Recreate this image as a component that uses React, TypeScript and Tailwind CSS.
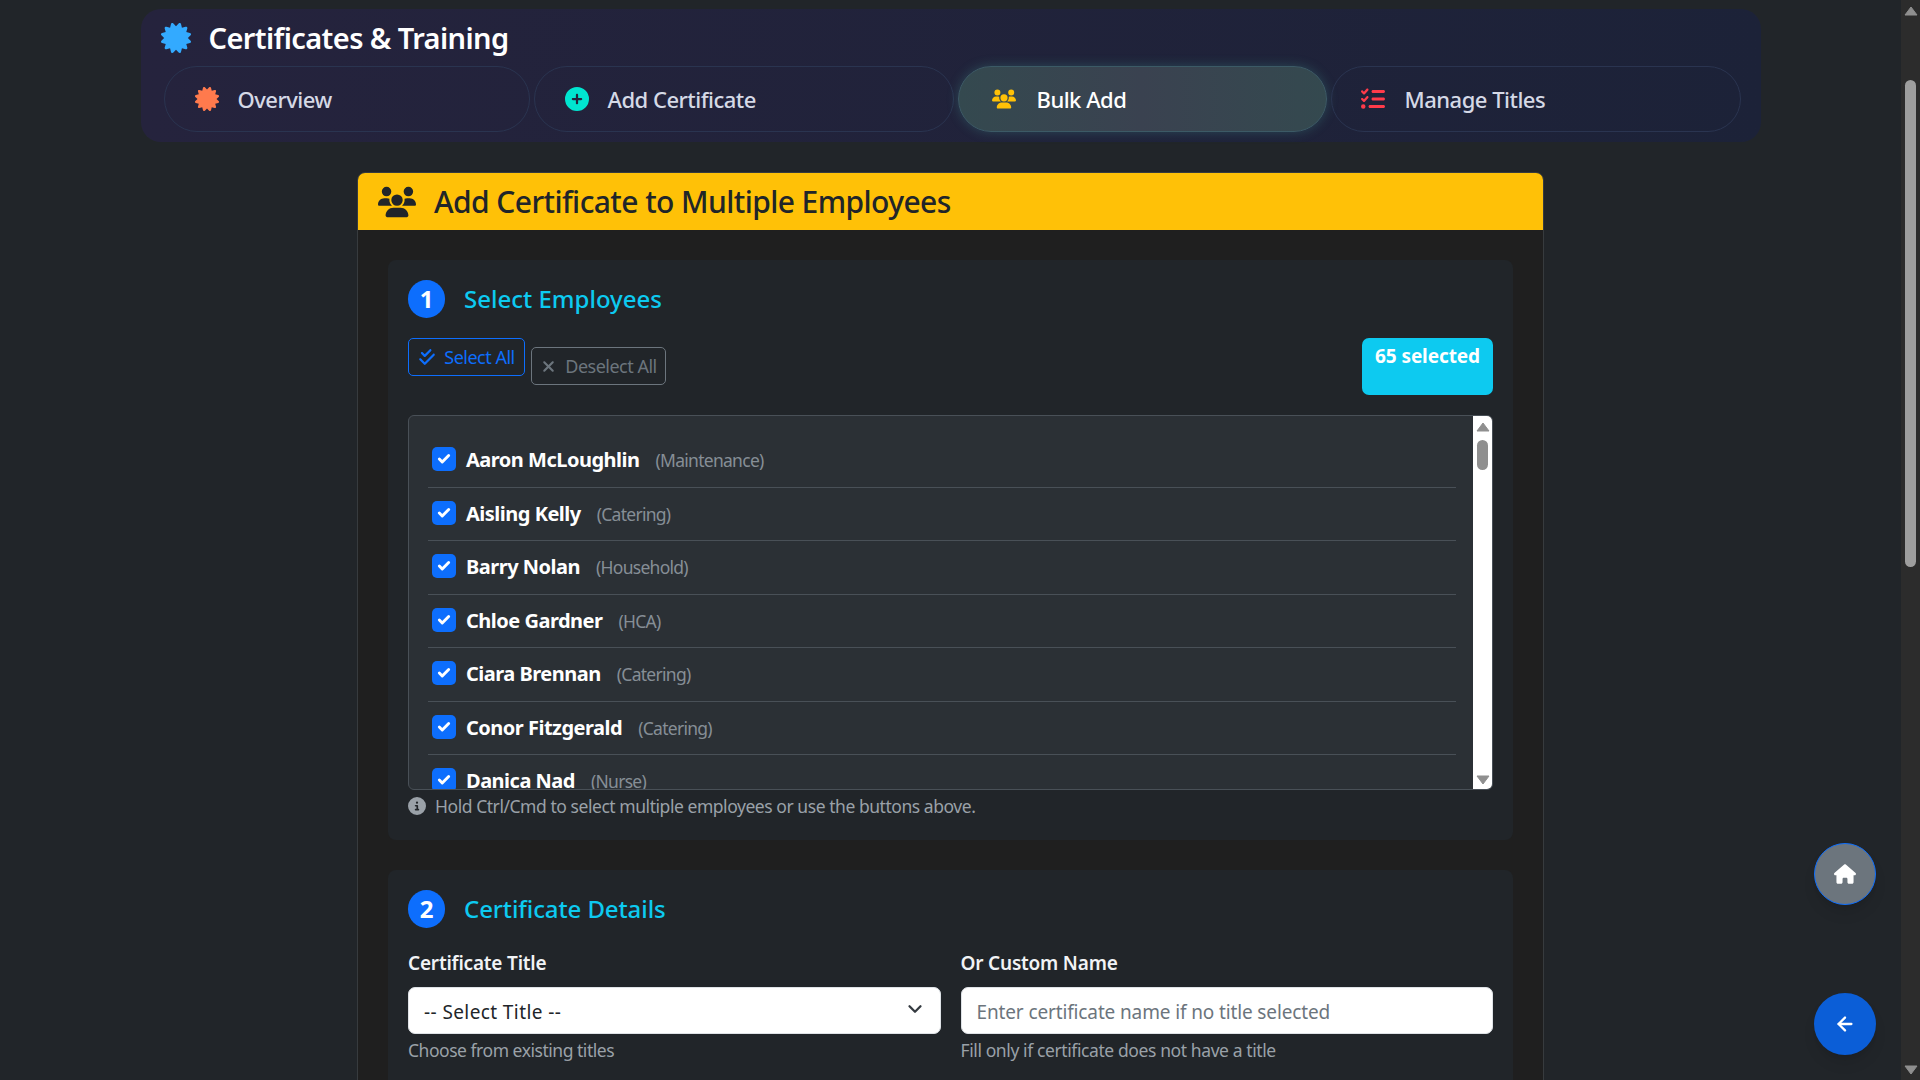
import { ArrowLeft, Check, ChevronDown } from "lucide-react";
import {
  FaCertificate,
  FaCheckDouble,
  FaCircleInfo,
  FaCirclePlus,
  FaHouse,
  FaListCheck,
  FaUsers,
  FaXmark,
} from "react-icons/fa6";

const tabs = [
  { label: "Overview", icon: FaCertificate, color: "text-[#ff7a4d]", width: "w-[366px]", pad: "pl-[30px] gap-[19px]" },
  { label: "Add Certificate", icon: FaCirclePlus, color: "text-[#00e5d0]", width: "w-[420px]", pad: "pl-[30px] gap-[19px]" },
  { label: "Bulk Add", icon: FaUsers, color: "text-[#ffc107]", width: "w-[369px]", pad: "pl-[33px] gap-[21px]", active: true },
  { label: "Manage Titles", icon: FaListCheck, color: "text-[#ff3b4a]", width: "w-[410px]", pad: "pl-[29px] gap-[20px]" },
];

const employees = [
  { name: "Aaron McLoughlin", dept: "Maintenance" },
  { name: "Aisling Kelly", dept: "Catering" },
  { name: "Barry Nolan", dept: "Household" },
  { name: "Chloe Gardner", dept: "HCA" },
  { name: "Ciara Brennan", dept: "Catering" },
  { name: "Conor Fitzgerald", dept: "Catering" },
  { name: "Danica Nad", dept: "Nurse" },
];

const Triangle = ({ down = false, className = "" }: { down?: boolean; className?: string }) => (
  <svg viewBox="0 0 14 10" className={className}>
    <path d={down ? "M1 1h12L7 9z" : "M7 1l6 8H1z"} fill="#8f8f8f" stroke="#8f8f8f" strokeLinejoin="round" />
  </svg>
);

const StepTitle = ({ step, title, tracking }: { step: number; title: string; tracking: string }) => (
  <div className="flex items-center gap-[19px]">
    <span className="flex h-[38px] w-[37px] items-center justify-center rounded-full bg-[#0d6efd] text-[24px] font-bold text-white">
      {step}
    </span>
    <h2 className={`text-[24px] leading-[38px] font-medium text-[#0dcaf0] ${tracking}`}>{title}</h2>
  </div>
);

const EmployeeList = () => (
  <div className="mt-[20px] flex h-[375px] overflow-hidden rounded-[6px] border border-[#495057] bg-[#2b3035]">
    <div className="flex-1 overflow-hidden pt-[18px] pl-[19px] pr-[17px]">
      {employees.map((e) => (
        <div key={e.name} className="flex h-[53.5px] shrink-0 items-center border-b border-[#495057] pl-[4px]">
          <span className="mb-[2px] flex h-[24px] w-[24px] items-center justify-center rounded-[5px] bg-[#0d6efd]">
            <Check className="h-[14px] w-[14px] text-white" strokeWidth={5} />
          </span>
          <span className="ml-[10px] text-[20px] font-bold tracking-[-0.5px] text-white">{e.name}</span>
          <span className="ml-[16px] text-[17.5px] tracking-[-0.72px] text-[#868e96]">({e.dept})</span>
        </div>
      ))}
    </div>
    <div className="flex w-[19px] flex-col items-center bg-white">
      <Triangle className="mt-[6px] h-[10px] w-[14px]" />
      <div className="mt-[8px] h-[30px] w-[11px] rounded-full bg-[#8f8f8f]" />
      <div className="flex-1" />
      <Triangle down className="mb-[4px] h-[10px] w-[14px]" />
    </div>
  </div>
);

const App = () => (
  <div
    className="relative flex h-screen overflow-hidden bg-[#212529] text-white"
    style={{ fontFamily: '"Noto Sans", "Open Sans", sans-serif' }}
  >
    <main className="flex-1 overflow-hidden">
      <header className="mx-auto mt-[9px] h-[133px] w-[1620px] rounded-[20px] bg-gradient-to-r from-[#25233d] to-[#1c2238] pr-[19px] pl-[23px]">
        <div className="flex h-[57px] items-center gap-[18px]">
          <FaCertificate className="ml-[-3px] text-[30px] text-[#33aaff]" />
          <h1 className="text-[29px] font-semibold tracking-[-0.6px] text-white">Certificates &amp; Training</h1>
        </div>
        <nav className="flex gap-[4px]">
          {tabs.map((t) => (
            <a
              key={t.label}
              className={`flex h-[66px] items-center rounded-[33px] border text-[22px] font-medium tracking-[-0.5px] ${t.width} ${t.pad} ${
                t.active
                  ? "border-[#3c5a66] bg-gradient-to-r from-[#34494f] via-[#3a4250] to-[#34494f] text-white shadow-[0_0_12px_rgba(70,160,150,0.3)]"
                  : "border-[#2a3450] text-[#d5d9e6]"
              }`}
            >
              <t.icon className={`text-[24px] ${t.color}`} />
              {t.label}
            </a>
          ))}
        </nav>
      </header>

      <section className="mx-auto mt-[30px] w-[1187px] rounded-t-[8px] border border-[#373b3e] bg-[#1f1f1f]">
        <div className="flex h-[57px] items-center gap-[18px] rounded-t-[7px] bg-[#ffc107] pl-[20px] text-[#212529]">
          <FaUsers className="text-[38px]" />
          <h3 className="text-[30px] font-medium tracking-[-0.58px]">Add Certificate to Multiple Employees</h3>
        </div>

        <div className="flex flex-col gap-[30px] px-[30px] pt-[30px]">
          <div className="h-[580px] rounded-[8px] bg-[#212529] px-[20px] pt-[20px]">
            <StepTitle step={1} title="Select Employees" tracking="tracking-[0px]" />
            <div className="mt-[20px] flex justify-between">
              <div className="flex items-start gap-[6px]">
                <button className="flex h-[38px] w-[117px] items-center justify-center gap-[8px] rounded-[5px] border border-[#0d6efd] text-[18px] tracking-[-0.5px] text-[#0d6efd]">
                  <FaCheckDouble className="text-[18px]" /> Select All
                </button>
                <button className="mt-[9px] flex h-[38px] w-[135px] items-center justify-center gap-[8px] rounded-[5px] border border-[#6c757d] text-[18px] tracking-[-0.5px] text-[#6c757d]">
                  <FaXmark className="text-[17px]" /> Deselect All
                </button>
              </div>
              <div className="h-[57px] w-[131px] rounded-[7px] bg-[#0dcaf0] pt-[4px] text-center text-[19px] font-bold tracking-[-0.1px] text-white">
                65 selected
              </div>
            </div>
            <EmployeeList />
            <p className="mt-[3px] flex items-center gap-[9px] text-[17.5px] tracking-[-0.45px] text-[#9aa1a8]">
              <FaCircleInfo className="text-[18px]" />
              Hold Ctrl/Cmd to select multiple employees or use the buttons above.
            </p>
          </div>

          <div className="h-[400px] rounded-[8px] bg-[#212529] px-[20px] pt-[20px]">
            <StepTitle step={2} title="Certificate Details" tracking="tracking-[-0.1px]" />
            <div className="mt-[22px] grid grid-cols-2 gap-[20px]">
              <div>
                <label className="block text-[19px] leading-[26px] font-semibold tracking-[-0.2px] text-[#f1f3f5]">
                  Certificate Title
                </label>
                <div className="relative mt-[11px]">
                  <select className="h-[47px] w-full appearance-none rounded-[7px] border border-[#dee2e6] bg-white px-[15px] pt-[3px] text-[19px] tracking-[0.4px] text-[#212529]">
                    <option>-- Select Title --</option>
                  </select>
                  <ChevronDown className="absolute top-[11px] right-[15px] h-[22px] w-[22px] text-[#343a40]" strokeWidth={2.5} />
                </div>
                <p className="mt-[3px] text-[17.5px] tracking-[-0.47px] text-[#9aa1a8]">Choose from existing titles</p>
              </div>
              <div>
                <label className="block text-[19px] leading-[26px] font-semibold tracking-[-0.2px] text-[#f1f3f5]">
                  Or Custom Name
                </label>
                <input
                  placeholder="Enter certificate name if no title selected"
                  className="mt-[11px] h-[47px] w-full rounded-[7px] border border-[#dee2e6] bg-white px-[15px] pt-[3px] text-[19px] tracking-[-0.13px] text-[#212529] placeholder:text-[#6c757d]"
                />
                <p className="mt-[3px] text-[17.5px] tracking-[-0.4px] text-[#9aa1a8]">
                  Fill only if certificate does not have a title
                </p>
              </div>
            </div>
          </div>
        </div>
      </section>
    </main>

    <aside className="flex w-[19px] shrink-0 flex-col items-center bg-[#2c2c2c]">
      <Triangle className="mt-[6px] h-[10px] w-[14px]" />
      <div className="mt-[64px] h-[487px] w-[11px] rounded-full bg-[#9e9e9e]" />
      <div className="flex-1" />
      <Triangle down className="mb-[5px] h-[10px] w-[14px]" />
    </aside>

    <a className="absolute top-[843px] left-[1814px] flex h-[62px] w-[62px] items-center justify-center rounded-full border border-[#0d6efd] bg-[#6c757d] text-white shadow-lg">
      <FaHouse className="text-[22px]" />
    </a>
    <a className="absolute top-[993px] left-[1814px] flex h-[62px] w-[62px] items-center justify-center rounded-full bg-[#0b5ed7] text-white shadow-lg">
      <ArrowLeft className="h-[22px] w-[22px]" strokeWidth={2.5} />
    </a>
  </div>
);

export default App;
